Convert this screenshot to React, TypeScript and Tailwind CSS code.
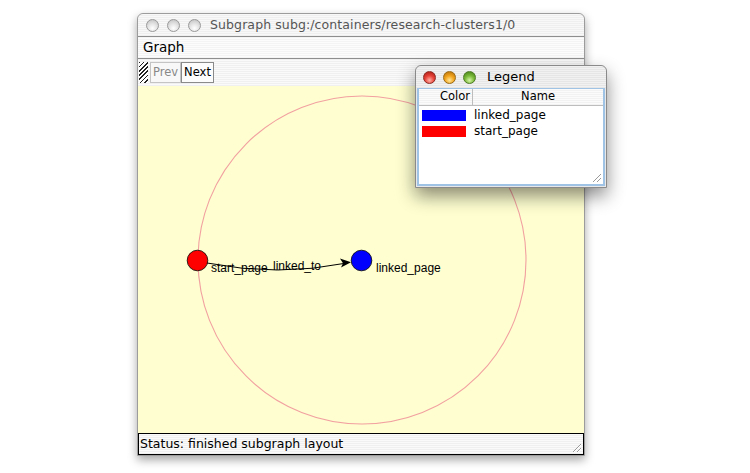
import React from 'react';

const ui = '"DejaVu Sans", "Liberation Sans", sans-serif';
const sans = '"Liberation Sans", Arial, sans-serif';

function Light({ color }: { color: 'grey' | 'red' | 'yellow' | 'green' }) {
    const fills: Record<string, string> = {
        grey: 'bg-[radial-gradient(circle_at_50%_75%,#ffffff_0%,#e4e4e4_45%,#bdbdbd_100%)] border-[#9a9a9a]',
        red: 'bg-[radial-gradient(circle_at_50%_75%,#ffb2a8_0%,#e8443a_45%,#a4160e_100%)] border-[#8c2a22]',
        yellow: 'bg-[radial-gradient(circle_at_50%_75%,#ffe79a_0%,#f2a51d_45%,#b06a08_100%)] border-[#9a6a14]',
        green: 'bg-[radial-gradient(circle_at_50%_75%,#d6f5a8_0%,#7cbb3a_45%,#3f7a14_100%)] border-[#4e7a24]',
    };
    return <div className={`w-[13px] h-[13px] rounded-full border ${fills[color]}`} />;
}

function Grip() {
    return (
        <svg width="12" height="12" viewBox="0 0 12 12" className="absolute right-[1px] bottom-[1px]">
            <path d="M11 3 L3 11 M11 7 L7 11" stroke="#9a9a9a" strokeWidth="1" />
            <path d="M11 4 L4 11 M11 8 L8 11" stroke="#ffffff" strokeWidth="1" />
        </svg>
    );
}

function GraphCanvas() {
    return (
        <svg width="447" height="349" viewBox="0 0 447 349" className="block">
            <circle cx="224" cy="174" r="164" fill="none" stroke="#f2a0a0" strokeWidth="1.1" />
            <path d="M69 177 Q 140 191 209 177" fill="none" stroke="#000" strokeWidth="1" />
            <path d="M213 176.3 L202 172.5 L205 177.3 L203 181.5 Z" fill="#000" />
            <circle cx="59.5" cy="174.5" r="10.3" fill="#ff0000" stroke="#000" strokeWidth="0.8" />
            <circle cx="223.5" cy="174.5" r="10.3" fill="#0000ff" stroke="#000" strokeWidth="0.8" />
            <g fontFamily={sans} fontSize="12" fill="#000">
                <text x="73" y="186">start_page</text>
                <text x="135" y="184">linked_to</text>
                <text x="238" y="186">linked_page</text>
            </g>
        </svg>
    );
}

function MainWindow() {
    return (
        <div className="absolute left-[137px] top-[13px] w-[448px] h-[443px] flex flex-col rounded-t-[6px] border border-[#9c9c9c] bg-[#f2f2f2] shadow-[0_4px_10px_rgba(0,0,0,0.35)]">
            {/* title bar */}
            <div className="h-[23px] shrink-0 flex items-center pl-[8px] gap-[8px] rounded-t-[6px] border-b border-[#8e8e8e] bg-[repeating-linear-gradient(0deg,#efefef_0px,#efefef_1px,#f8f8f8_1px,#f8f8f8_2px)]">
                <Light color="grey" />
                <Light color="grey" />
                <Light color="grey" />
                <span className="ml-[1px] text-[12.5px] text-[#555] tracking-[0.1px]" style={{ fontFamily: ui }}>
                    Subgraph subg:/containers/research-clusters1/0
                </span>
            </div>
            {/* menu */}
            <div className="h-[22px] shrink-0 flex items-center px-[5px] border-b border-[#8e8e8e] bg-[repeating-linear-gradient(0deg,#f4f4f4_0px,#f4f4f4_1px,#fcfcfc_1px,#fcfcfc_2px)]">
                <span className="text-[13.5px] text-black" style={{ fontFamily: ui }}>Graph</span>
            </div>
            {/* toolbar */}
            <div className="h-[27px] shrink-0 flex items-center gap-[2px] pl-[1px] bg-[repeating-linear-gradient(0deg,#f0f0f0_0px,#f0f0f0_1px,#fafafa_1px,#fafafa_2px)]">
                <div className="w-[9px] h-[21px] bg-[repeating-linear-gradient(135deg,#222_0px,#222_1.2px,#ffffff_1.2px,#ffffff_3px)]" />
                <div className="h-[21px] px-[2px] flex items-center border border-[#c4c4c4] bg-[#f8f8f8] text-[11.5px] text-[#888]" style={{ fontFamily: ui }}>
                    Prev
                </div>
                <div className="h-[21px] -ml-[2px] px-[2px] flex items-center border border-[#8a8a8a] bg-[#fcfcfc] text-[11.5px] text-black" style={{ fontFamily: ui }}>
                    Next
                </div>
            </div>
            {/* canvas */}
            <div className="flex-1 bg-[#fefed0] overflow-hidden">
                <GraphCanvas />
            </div>
            {/* status */}
            <div className="relative h-[22px] shrink-0 flex items-center px-[1px] border border-black bg-[repeating-linear-gradient(0deg,#f0f0f0_0px,#f0f0f0_1px,#fafafa_1px,#fafafa_2px)]">
                <span className="text-[12.5px] text-black" style={{ fontFamily: ui }}>Status: finished subgraph layout</span>
                <Grip />
            </div>
        </div>
    );
}

function LegendWindow() {
    const rows = [
        { name: 'linked_page', color: 'bg-[#0000ff]' },
        { name: 'start_page', color: 'bg-[#ff0000]' },
    ];
    return (
        <div className="absolute left-[415px] top-[65px] w-[192px] h-[123px] flex flex-col rounded-t-[6px] border border-[#8a8a8a] bg-[#e8e8e8] shadow-[0_8px_18px_rgba(0,0,0,0.45)]">
            <div className="h-[22px] shrink-0 flex items-center pl-[7px] gap-[7px] rounded-t-[6px] bg-[repeating-linear-gradient(0deg,#e6e6e6_0px,#e6e6e6_1px,#f1f1f1_1px,#f1f1f1_2px)]">
                <Light color="red" />
                <Light color="yellow" />
                <Light color="green" />
                <span className="ml-[4px] text-[13px] text-black" style={{ fontFamily: ui }}>Legend</span>
            </div>
            <div className="relative flex-1 flex flex-col mx-[1px] mb-[1px] border-2 border-t border-[#9ec3e4] bg-white">
                <div className="h-[17px] shrink-0 flex border-b border-[#bdbdbd] bg-[repeating-linear-gradient(0deg,#f2f2f2_0px,#f2f2f2_1px,#fbfbfb_1px,#fbfbfb_2px)] text-[11.5px] text-black" style={{ fontFamily: ui }}>
                    <div className="w-[54px] flex items-center justify-end pr-[2px] border-r border-[#bdbdbd]">Color</div>
                    <div className="flex-1 flex items-center justify-center">Name</div>
                </div>
                <div className="flex flex-col pt-[1px]">
                    {rows.map((r) => (
                        <div key={r.name} className="h-[16px] flex items-center">
                            <div className="w-[54px] pl-[3px] flex items-center">
                                <div className={`w-[44px] h-[11px] ${r.color}`} />
                            </div>
                            <span className="pl-[1px] text-[12px] text-black" style={{ fontFamily: ui }}>{r.name}</span>
                        </div>
                    ))}
                </div>
                <Grip />
            </div>
        </div>
    );
}

export default function App() {
    return (
        <div className="relative w-[750px] h-[473px] bg-white overflow-hidden">
            <MainWindow />
            <LegendWindow />
        </div>
    );
}
